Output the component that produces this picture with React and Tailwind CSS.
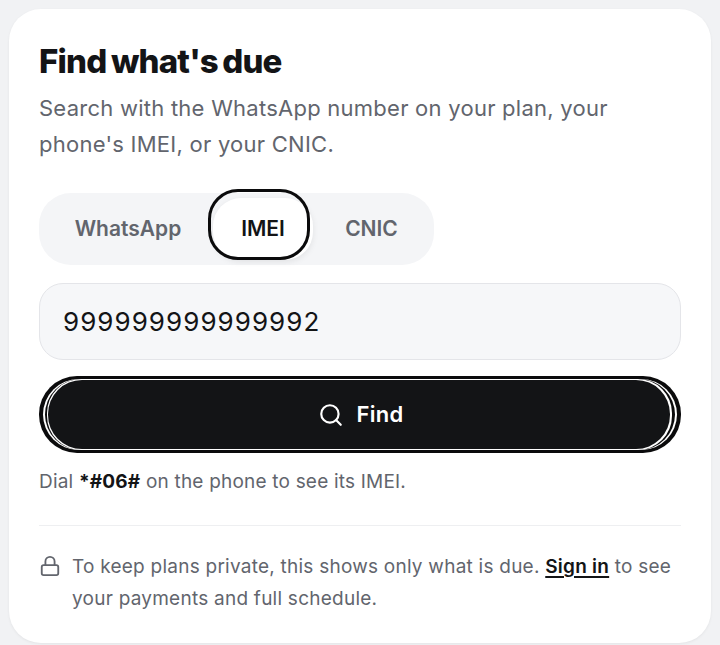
import React from 'react';
import { Search, Lock } from 'lucide-react';

const tabs = ['WhatsApp', 'IMEI', 'CNIC'];

export default function App() {
  return (
    <div className="min-h-[645px] bg-[#f1f2f4] px-[9px] pt-[9px] font-['Inter',sans-serif]">
      <div className="h-[634px] rounded-[32px] bg-white px-[30px] pt-[30px] shadow-[0_1px_3px_rgba(0,0,0,0.06)]">
        <h1 className="text-[33px] leading-[44px] font-extrabold tracking-[-0.8px] [word-spacing:-2px] text-[#131416]">Find what's due</h1>
        <p className="mt-[7px] text-[22px] leading-[36px] tracking-[0.25px] text-[#62656d]">
          Search with the WhatsApp number on your plan, your phone's IMEI, or your CNIC.
        </p>

        {/* tabs */}
        <div className="mt-[31px] flex h-[72px] w-[395px] items-center rounded-[32px] bg-[#f4f5f7] px-[4px]">
          {tabs.map((t) =>
            t === 'IMEI' ? (
              <div key={t} className="relative flex h-[62px] w-[100px] items-center justify-center rounded-[28px] bg-white text-[21px] font-semibold text-[#131416] shadow-[0_2px_6px_rgba(0,0,0,0.08)]">
                <span className="absolute -top-[9px] -left-[5px] h-[71px] w-[102px] rounded-[30px] border-[3px] border-[#0b0b0c]"></span>
                {t}
              </div>
            ) : (
              <div key={t} className={t === 'WhatsApp' ? 'flex h-[62px] w-[170px] items-center justify-center text-[21px] font-semibold text-[#62656d]' : 'flex h-[62px] w-[117px] items-center justify-center text-[21px] font-semibold text-[#62656d]'}>
                {t}
              </div>
            )
          )}
        </div>

        <div className="mt-[18px] flex h-[77px] items-center rounded-[24px] border border-[#e4e5e9] bg-[#f6f7f9] pl-[23px] text-[26px] tracking-[1.05px] text-[#131416]">
          999999999999992
        </div>

        {/* button with focus rings, wider at the ends than along the top */}
        <div className="mt-[16px] h-[77px] rounded-[38px] bg-[#0b0b0c] px-[4px] py-[3px]">
          <div className="h-full rounded-[36px] bg-white px-[2px]">
            <div className="h-full rounded-[36px] bg-[#0b0b0c] pl-[2px] pr-[3px]">
              <div className="h-full rounded-[34px] bg-white py-[1px] pl-[1px] pr-[2px]">
                <div className="flex h-full items-center justify-center gap-[12px] rounded-[34px] bg-[#131416] pl-[4px] text-[22px] font-semibold tracking-[0.3px] text-white">
                  <Search size={26} strokeWidth={2} />
                  Find
                </div>
              </div>
            </div>
          </div>
        </div>

        <p className="mt-[15px] text-[19px] leading-[28px] tracking-[0.2px] text-[#62656d]">
          Dial <span className="font-bold text-[#131416]">*#06#</span> on the phone to see its IMEI.
        </p>

        <div className="mt-[29px] flex gap-[11px] border-t border-[#eeeff1] pt-[25px]">
          <Lock size={22} strokeWidth={2} className="mt-[4px] shrink-0 text-[#62656d]" />
          <p className="text-[19px] leading-[32px] tracking-[0.24px] text-[#62656d]">
            To keep plans private, this shows only what is due. <a className="font-semibold text-[#131416] underline decoration-2 underline-offset-[3px]">Sign in</a> to see your payments and full schedule.
          </p>
        </div>
      </div>
    </div>
  );
}
